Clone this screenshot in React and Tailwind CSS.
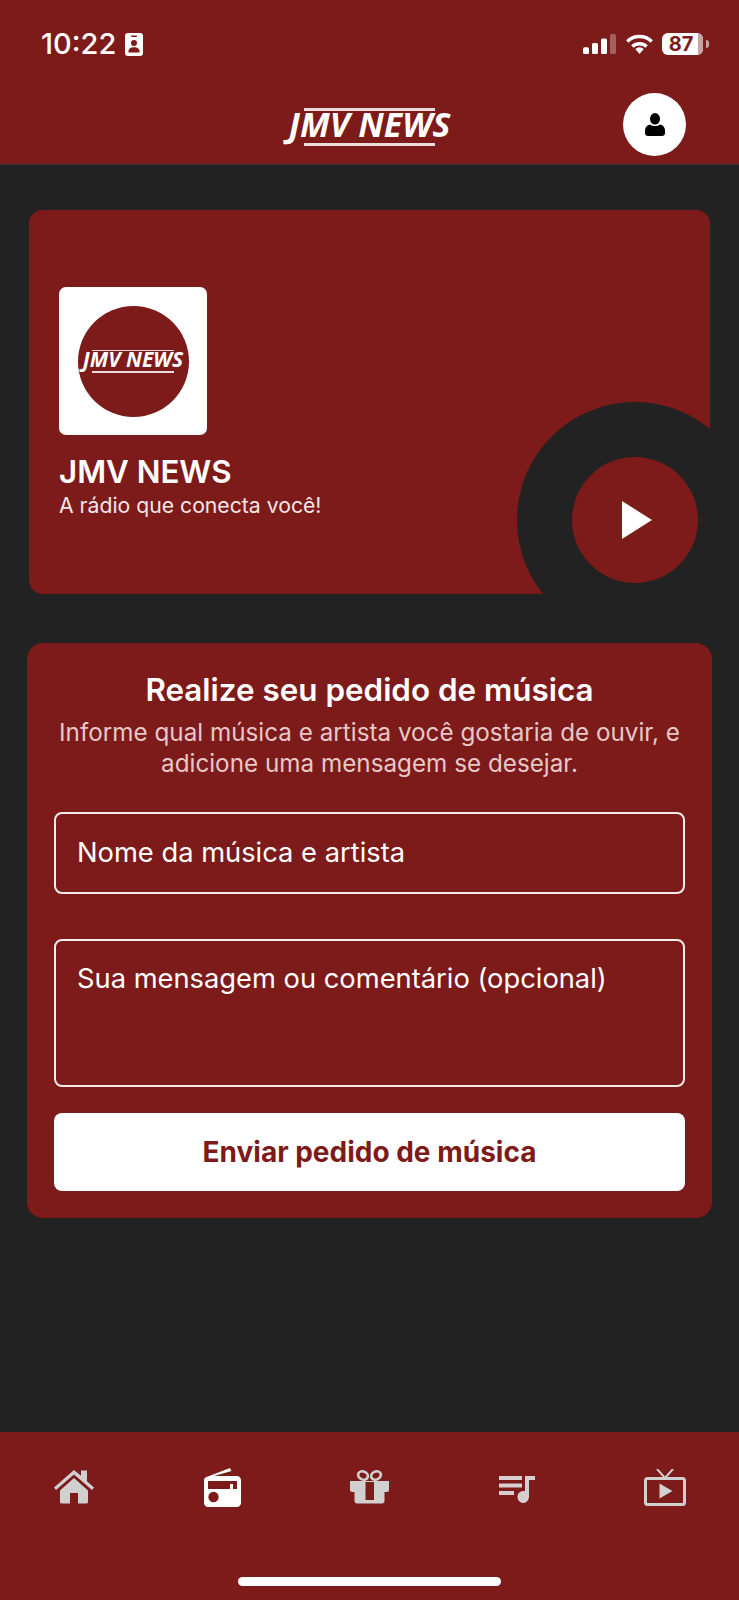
const RED = 'bg-[#7d1a1a]';

function Logo({ small }) {
  return (
    <div className="flex flex-col items-center" style={{ fontFamily: '"Open Sans", sans-serif' }}>
      <div className={small ? 'h-[1.5px] w-[82px] bg-[#eedcdc]' : 'h-[3px] w-[131px] bg-[#eedcdc]'} />
      <span className={small ? 'italic font-bold text-white text-[21px] leading-[17px] mb-[3px]' : 'italic font-bold text-white text-[33.800px] leading-[27px] mb-[5px]'}>
        JMV NEWS
      </span>
      <div className={small ? 'h-[1.5px] w-[82px] bg-[#eedcdc]' : 'h-[3px] w-[131px] bg-[#eedcdc]'} />
    </div>
  );
}

function StatusBar() {
  return (
    <div className="h-[89px] flex items-start justify-between pl-[41px] pr-[30px] pt-[33px] text-white">
      <div className="flex items-start gap-[9px]">
        <span className="text-[29px] leading-[22px] font-medium" style={{ fontFamily: 'Inter, sans-serif' }}>10:22</span>
        <svg width="18" height="23" viewBox="0 0 18 23">
          <rect width="18" height="23" rx="3" fill="#fff" />
          <rect x="6" y="2.500" width="6" height="1.500" rx="0.700" fill="#7d1a1a" />
          <circle cx="9" cy="10" r="3" fill="#7d1a1a" />
          <path d="M3.500 19.500v-1.500c0-2.500 2.500-3.800 5.500-3.800s5.500 1.300 5.500 3.800v1.500z" fill="#7d1a1a" />
        </svg>
      </div>
      <div className="flex items-center h-[22px]">
        <svg width="33" height="20" viewBox="0 0 33 20">
          <rect x="0" y="13.300" width="6" height="6.700" rx="1.500" fill="#fff" />
          <rect x="9" y="9" width="6" height="11" rx="1.500" fill="#fff" />
          <rect x="18" y="4.500" width="6" height="15.500" rx="1.500" fill="#fff" />
          <rect x="27" y="0" width="6" height="20" rx="1.500" fill="#fff" fillOpacity="0.3" />
        </svg>
        <svg width="27" height="20" viewBox="0 0 27 20" className="ml-[10px]">
          <path d="M13.500 20l-4.200-5a6 6 0 0 1 8.400 0z" fill="#fff" />
          <path d="M1.300 7.500a17.500 17.500 0 0 1 24.400 0" fill="none" stroke="#fff" strokeWidth="3.500" />
          <path d="M6.400 12.500a10.500 10.500 0 0 1 14.200 0" fill="none" stroke="#fff" strokeWidth="3.500" />
        </svg>
        <div className="flex items-center ml-[9px]">
          <div className="relative w-[41px] h-[22px] rounded-[6px] bg-white flex items-center justify-center overflow-hidden">
            <div className="absolute right-0 top-0 bottom-0 w-[5px] bg-[#c9a3a3]" />
            <span className="relative text-[#7d1a1a] text-[20px] leading-none font-bold pr-[3px]" style={{ fontFamily: 'Inter, sans-serif' }}>87</span>
          </div>
          <div className="w-[3px] h-[8px] rounded-r bg-[#c9a3a3] ml-[3px]" />
        </div>
      </div>
    </div>
  );
}

function HomeIcon() {
  return (
    <svg width="40" height="34" viewBox="0 0 40 34" fill="#d0d0d0">
      <path d="M20 0L0 17.500l2 2.500L20 4.500 38 20l2-2.500-7-6.300V.5h-6v5.300z" />
      <path d="M20 8L6 20.500V32c0 .8.700 1.500 1.500 1.500H16V23h8v10.500h8.500c.8 0 1.500-.7 1.500-1.500V20.500z" />
    </svg>
  );
}

function RadioIcon() {
  return (
    <svg width="37" height="39" viewBox="0 0 37 39">
      <path d="M2.500 9L26 0l1.500 3L10 8H33c2.200 0 4 1.800 4 4v23c0 2.200-1.800 4-4 4H4c-2.200 0-4-1.800-4-4V12c0-1.500 1-2.500 2.500-3z" fill="#fff" />
      <path d="M4 13h29v8h-4v-5h-3v5H4z" fill="#7d1a1a" />
      <circle cx="9.500" cy="29" r="5.200" fill="#7d1a1a" />
    </svg>
  );
}

function GiftIcon() {
  return (
    <svg width="39" height="34" viewBox="0 0 39 34">
      <ellipse cx="13" cy="5.500" rx="5" ry="4" fill="none" stroke="#d0d0d0" strokeWidth="2.600" transform="rotate(25 13 5.500)" />
      <ellipse cx="26" cy="5.500" rx="5" ry="4" fill="none" stroke="#d0d0d0" strokeWidth="2.600" transform="rotate(-25 26 5.500)" />
      <path fillRule="evenodd" d="M0 11h39v9c0 1-1 2-2 2h-2.500v9c0 1.500-1 2.500-2.500 2.500H7c-1.500 0-2.500-1-2.500-2.500v-9H2c-1 0-2-1-2-2zM15.500 12v18H24V12z" fill="#d0d0d0" />
    </svg>
  );
}

function QueueIcon() {
  return (
    <svg width="36" height="27" viewBox="0 0 36 27" fill="#d8d0d0" className="mt-[5px]">
      <rect x="0" y="0" width="23" height="4" />
      <rect x="0" y="7.500" width="23" height="4" />
      <rect x="0" y="15" width="15" height="4" />
      <path d="M26 0h10v4h-6v16.500c0 3.500-2.500 6.500-5.500 6.500s-6-2.500-6-6 2.500-6 6-6c.5 0 1 .1 1.500.2z" />
    </svg>
  );
}

function TvIcon() {
  return (
    <svg width="42" height="37" viewBox="0 0 42 37" fill="none" stroke="#d0d0d0" strokeWidth="3">
      <path d="M13 0l8 9 8-9" strokeWidth="2" />
      <rect x="1.500" y="9.500" width="39" height="26" rx="2" />
      <path d="M15.500 14.500l13 7.500-13 7.500z" fill="#d0d0d0" stroke="none" />
    </svg>
  );
}

export default function App() {
  return (
    <div className="w-[739px] h-[1600px] flex flex-col bg-[#222222] text-white overflow-hidden" style={{ fontFamily: 'Inter, sans-serif' }}>
      {/* Header */}
      <header className={`${RED} h-[165px] border-b border-[#3a3a3a] shrink-0`}>
        <StatusBar />
        <div className="relative flex items-center justify-center h-[75px]">
          <Logo />
          <button className="absolute right-[53px] top-[4px] w-[63px] h-[63px] rounded-full bg-white flex items-center justify-center">
            <svg width="20" height="23" viewBox="0 0 20 23" fill="#000">
              <ellipse cx="10" cy="5.800" rx="5" ry="5.800" />
              <path d="M5 11.500c1.500 1 3.200 1.500 5 1.500s3.500-.5 5-1.500c3 .5 5 3 5 6V20c0 1.700-1.300 3-3 3H3c-1.700 0-3-1.300-3-3v-2.500c0-3 2-5.500 5-6z" />
            </svg>
          </button>
        </div>
      </header>

      <main className="flex-1 flex flex-col">
        {/* Radio card */}
        <section className={`${RED} relative overflow-hidden mt-[45px] mx-[29px] h-[384px] rounded-[14px] pl-[30px] pt-[77px]`}>
          <div className="w-[148px] h-[148px] bg-white rounded-[7px] flex items-center justify-center">
            <div className={`${RED} w-[111px] h-[111px] rounded-full flex items-center justify-center`}>
              <Logo small />
            </div>
          </div>
          <h2 className="mt-[19px] text-[31.300px] leading-[36px] font-semibold">JMV NEWS</h2>
          <p className="mt-[3px] text-[21.200px] leading-[24px] text-[#f3e6e6]">A rádio que conecta você!</p>
          <div className="absolute left-[488px] top-[192px] w-[236px] h-[236px] rounded-full bg-[#222222] flex items-center justify-center">
            <div className={`${RED} w-[126px] h-[126px] rounded-full flex items-center justify-center`}>
              <svg width="30" height="38" viewBox="0 0 30 38" fill="#fff" className="ml-[3px]">
                <path d="M0 0l30 19L0 38z" />
              </svg>
            </div>
          </div>
        </section>

        {/* Request form */}
        <section className={`${RED} mt-[49px] mx-[27px] h-[575px] rounded-[16px] px-[27px] pt-[27px] flex flex-col`}>
          <h2 className="text-center text-[31.400px] leading-[40px] font-semibold">Realize seu pedido de música</h2>
          <p className="mt-[7px] text-center text-[24.250px] leading-[31px] text-[#e6c8c8]">
            Informe qual música e artista você gostaria de ouvir, e adicione uma mensagem se desejar.
          </p>
          <div className="mt-[33px] h-[82px] rounded-[8px] border-2 border-[#f5eaea] flex items-center px-[21px] text-[27.300px]">
            Nome da música e artista
          </div>
          <div className="mt-[45px] h-[148px] rounded-[8px] border-2 border-[#f5eaea] px-[21px] pt-[20px] text-[27.300px] leading-[36px]">
            Sua mensagem ou comentário (opcional)
          </div>
          <button className="mt-[26px] h-[78px] rounded-[8px] bg-white text-[#7d1a1a] text-[28px] font-bold">
            Enviar pedido de música
          </button>
        </section>
      </main>

      {/* Bottom nav */}
      <nav className={`${RED} relative h-[168px] shrink-0 pl-[54px] pr-[53px] pt-[35px]`}>
        <div className="h-[40px] flex items-center justify-between">
          <HomeIcon />
          <RadioIcon />
          <GiftIcon />
          <QueueIcon />
          <TvIcon />
        </div>
        <div className="absolute left-[238px] bottom-[14px] w-[263px] h-[9px] rounded-full bg-white" />
      </nav>
    </div>
  );
}
